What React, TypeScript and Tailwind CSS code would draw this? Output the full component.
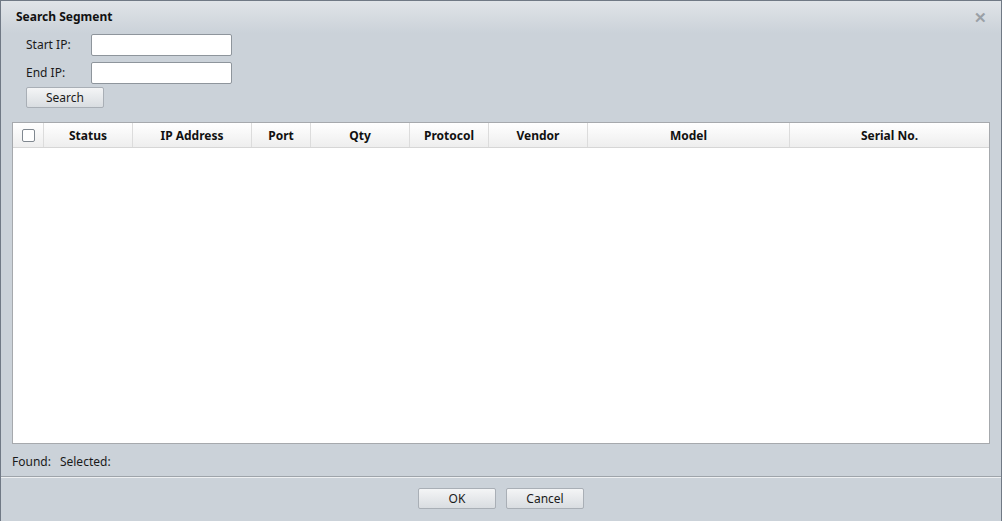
import React from "react";

const columns = [
  { label: "Status", w: "w-[89px]" },
  { label: "IP Address", w: "w-[119px]" },
  { label: "Port", w: "w-[59px]" },
  { label: "Qty", w: "w-[99px]" },
  { label: "Protocol", w: "w-[79px]" },
  { label: "Vendor", w: "w-[99px]" },
  { label: "Model", w: "w-[202px]" },
  { label: "Serial No.", w: "flex-1" },
];

const Btn = ({ children, w = "w-[78px]" }: { children: React.ReactNode; w?: string }) => (
  <button
    className={`${w} h-[21px] rounded-[2px] border border-[#a9afb6] bg-gradient-to-b from-[#f4f5f6] to-[#d9dde1] text-[12px] text-[#1a1a1a] leading-none`}
  >
    {children}
  </button>
);

export default function App() {
  return (
    <div
      className="w-[1002px] h-[521px] bg-[#cbd2d9] border-x border-t border-[#707985] flex flex-col text-[12px] text-[#1a1a1a]"
      style={{ fontFamily: '"Noto Sans", "Liberation Sans", sans-serif' }}
    >
      {/* title bar */}
      <div className="h-[32px] shrink-0 bg-gradient-to-b from-[#e0e4e8] to-[#cbd2d9] flex items-center pl-[15px] pr-[14px]">
        <span className="font-bold text-[12px] text-[#111]">Search Segment</span>
        <span className="ml-auto text-[#9aa0a6] text-[15px] font-bold leading-none">✕</span>
      </div>

      {/* form */}
      <div className="pl-[25px] flex flex-col">
        <div className="flex items-center h-[22px] mt-[1px]">
          <span className="w-[65px]">Start IP:</span>
          <input className="w-[141px] h-[22px] bg-white border border-[#8e959c] rounded-[2px] outline-none" />
        </div>
        <div className="flex items-center h-[22px] mt-[6px]">
          <span className="w-[65px]">End IP:</span>
          <input className="w-[141px] h-[22px] bg-white border border-[#8e959c] rounded-[2px] outline-none" />
        </div>
        <div className="mt-[3px]">
          <Btn>Search</Btn>
        </div>
      </div>

      {/* table */}
      <div className="mx-[11px] mt-[14px] h-[322px] bg-white border border-[#a6a9ad] flex flex-col">
        <div className="h-[25px] pt-[2px] flex bg-gradient-to-b from-[#ffffff] to-[#eeeeee] border-b border-[#d6d6d6] font-bold text-[12px] text-[#111]">
          <div className="w-[31px] -mt-[2px] flex items-center justify-center border-r border-[#dcdcdc]">
            <div className="w-[13px] h-[13px] border border-[#808890] rounded-[2px] bg-white" />
          </div>
          {columns.map((c) => (
            <div
              key={c.label}
              className={`${c.w} -mt-[2px] pt-[2px] flex items-center justify-center border-r border-[#dcdcdc] last:border-r-0`}
            >
              {c.label}
            </div>
          ))}
        </div>
        <div className="flex-1" />
      </div>

      {/* status */}
      <div className="pl-[11px] mt-[10px] h-[15px] flex items-center gap-[9px]">
        <span>Found:</span>
        <span>Selected:</span>
      </div>

      {/* footer */}
      <div className="mt-[7px] border-t border-[#9ea4aa]">
        <div className="border-t border-[#eef0f2]" />
      </div>
      <div className="flex justify-center gap-[10px] pt-[10px]">
        <Btn>OK</Btn>
        <Btn>Cancel</Btn>
      </div>
    </div>
  );
}
